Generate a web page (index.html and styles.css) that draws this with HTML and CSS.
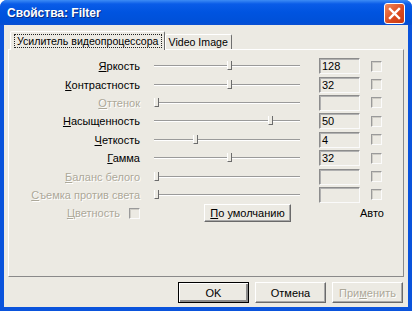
FILE: index.html
```html
<!DOCTYPE html>
<html lang="ru">
<head>
    <meta charset="UTF-8">
    <title>Свойства: Filter</title>
    <link rel="stylesheet" href="styles.css">
</head>
<body>
    <div class="window">
        <div class="titlebar">
            <span class="title">Свойства: Filter</span>
            <span class="close">
                <svg width="13" height="13" viewBox="0 0 13 13"><path d="M2 2 L11 11 M11 2 L2 11" stroke="#fff" stroke-width="2.4" stroke-linecap="square"/></svg>
            </span>
        </div>
        <div class="body">
            <div class="tabs">
                <div class="tab active"><span class="focus">Усилитель видеопроцессора</span></div>
                <div class="tab">Video Image</div>
            </div>
            <div class="panel">
                <div class="label"><u>Я</u>ркость</div>
                <div class="slider"><div class="track"></div><div class="thumb" style="left: 73px"></div></div>
                <div class="field">128</div>
                <div class="check"></div>

                <div class="label"><u>К</u>онтрастность</div>
                <div class="slider"><div class="track"></div><div class="thumb" style="left: 73px"></div></div>
                <div class="field">32</div>
                <div class="check"></div>

                <div class="label disabled"><u>О</u>ттенок</div>
                <div class="slider"><div class="track"></div><div class="thumb" style="left: 0px"></div></div>
                <div class="field"></div>
                <div class="check"></div>

                <div class="label"><u>Н</u>асыщенность</div>
                <div class="slider"><div class="track"></div><div class="thumb" style="left: 114px"></div></div>
                <div class="field">50</div>
                <div class="check"></div>

                <div class="label"><u>Ч</u>еткость</div>
                <div class="slider"><div class="track"></div><div class="thumb" style="left: 39px"></div></div>
                <div class="field">4</div>
                <div class="check"></div>

                <div class="label"><u>Г</u>амма</div>
                <div class="slider"><div class="track"></div><div class="thumb" style="left: 73px"></div></div>
                <div class="field">32</div>
                <div class="check"></div>

                <div class="label disabled"><u>Б</u>аланс белого</div>
                <div class="slider"><div class="track"></div><div class="thumb" style="left: 0px"></div></div>
                <div class="field"></div>
                <div class="check"></div>

                <div class="label disabled"><u>С</u>ъемка против света</div>
                <div class="slider"><div class="track"></div><div class="thumb" style="left: 0px"></div></div>
                <div class="field"></div>
                <div class="check"></div>

                <div class="label disabled color-row">
                    <span><u>Ц</u>ветность</span>
                    <span class="check"></span>
                </div>
                <div class="default-cell"><button class="btn small"><u>П</u>о умолчанию</button></div>
                <div class="auto">Авто</div>
            </div>
            <div class="buttons">
                <button class="btn default">OK</button>
                <button class="btn">Отмена</button>
                <button class="btn off">При<u>м</u>енить</button>
            </div>
        </div>
    </div>
</body>
</html>
```

FILE: styles.css
```css
body {
    margin: 0;
    font-family: "Liberation Sans", Arial, sans-serif;
    font-size: 11px;
    background: #fff;
}
.window {
    width: 412px;
    height: 311px;
    box-sizing: border-box;
    background: #0a53dc;
    border-radius: 7px 7px 0 0;
    display: flex;
    flex-direction: column;
    overflow: hidden;
}
.titlebar {
    height: 25px;
    flex: none;
    display: flex;
    align-items: center;
    justify-content: space-between;
    padding: 0 7px 0 7px;
    background: linear-gradient(#3d8cf5 0, #0a5ce8 4px, #0054e0 12px, #0050d8 22px, #0a4fd2 25px);
}
.title {
    color: #fff;
    font-weight: bold;
    font-size: 12px;
    text-shadow: 1px 1px 0 #0a2a80;
}
.close {
    width: 19px;
    height: 19px;
    border: 1px solid #fff;
    border-radius: 3px;
    background: linear-gradient(135deg, #f08a5c, #d9481d 60%, #c83a12);
    display: flex;
    align-items: center;
    justify-content: center;
    margin-top: 1px;
}
.body {
    flex: 1;
    margin: 0 4px 4px 4px;
    background: #eceae3;
    display: flex;
    flex-direction: column;
}
.tabs {
    display: flex;
    align-items: flex-end;
    height: 18px;
    margin: 6px 0 0 6px;
    position: relative;
    z-index: 1;
}
.tab {
    height: 15px;
    padding: 0 3px;
    box-sizing: border-box;
    border: 1px solid #fff;
    border-right-color: #6f6f6f;
    border-bottom: none;
    border-radius: 2px 2px 0 0;
    line-height: 14px;
    font-size: 10.6px;
    color: #000;
}
.tab.active {
    height: 19px;
    padding: 2px 2px 0 3px;
    margin-bottom: -1px;
    background: #eceae3;
}
.focus {
    display: block;
    border: 1px dotted #222;
    padding: 0 2px;
    line-height: 12px;
}
.panel {
    height: 228px;
    box-sizing: border-box;
    margin: 0 4px;
    border: 1px solid #fff;
    border-right-color: #8a8a8a;
    border-bottom-color: #8a8a8a;
    padding-top: 7px;
    display: grid;
    grid-template-columns: 145px 165px 52px 13px;
    grid-auto-rows: 18.4px;
    align-items: center;
}
.label {
    text-align: right;
    padding-right: 14px;
    color: #000;
    white-space: nowrap;
}
.disabled {
    color: #aca899;
    text-shadow: 1px 1px 0 #fff;
}
.slider {
    position: relative;
    width: 146px;
    height: 12px;
}
.track {
    margin-top: 5px;
    height: 0;
    border-top: 1px solid #9a9a9a;
    border-bottom: 1px solid #fff;
}
.thumb {
    position: absolute;
    top: 1px;
    width: 3px;
    height: 8px;
    background: #eceae3;
    border-left: 1px solid #fff;
    border-right: 1px solid #6c6c6c;
    border-bottom: 1px solid #6c6c6c;
}
.field {
    width: 41px;
    height: 16px;
    box-sizing: border-box;
    border: 1px solid;
    border-color: #8c8c8c #fafafa #fafafa #8c8c8c;
    box-shadow: inset 1px 1px 0 #b0b0b0;
    padding: 1px 0 0 2px;
    line-height: 13px;
    color: #000;
}
.check {
    display: block;
    width: 11px;
    height: 11px;
    box-sizing: border-box;
    border: 1px solid;
    border-color: #9a9a9a #fbfbfb #fbfbfb #9a9a9a;
    box-shadow: inset 1px 1px 0 #cfcdc6;
}
.color-row {
    display: flex;
    justify-content: flex-end;
    align-items: center;
    gap: 9px;
}
.default-cell {
    padding-left: 50px;
}
.auto {
    grid-column: 3 / 5;
    justify-self: end;
    color: #000;
}
.btn {
    font-family: "Liberation Sans", Arial, sans-serif;
    font-size: 11px;
    color: #000;
    background: #eceae3;
    width: 71px;
    height: 21px;
    padding: 0;
    border: 1px solid;
    border-color: #fff #6a6a6a #6a6a6a #fff;
    box-shadow: inset -1px -1px 0 #a8a8a8;
}
.btn.small {
    width: 87px;
    height: 18px;
}
.btn.default {
    border: 1px solid #000;
    box-shadow: inset 1px 1px 0 #fff, inset -2px -2px 0 #8a8a8a;
}
.btn.off {
    color: #aca899;
    text-shadow: 1px 1px 0 #fff;
}
.buttons {
    display: flex;
    justify-content: flex-end;
    gap: 6px;
    margin-top: 5px;
    padding-right: 5px;
}
```
